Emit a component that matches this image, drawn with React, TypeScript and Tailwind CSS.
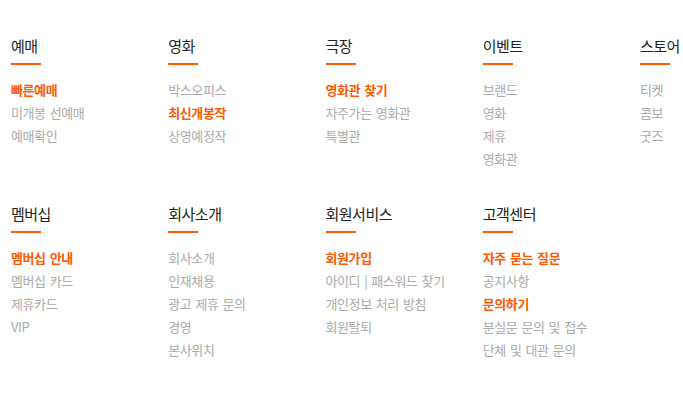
import React from "react";

interface LinkItem {
  label: string;
  hot?: boolean;
}

interface Section {
  title: string;
  links: LinkItem[];
}

const ROWS: Section[][] = [
  [
    { title: "예매", links: [{ label: "빠른예매", hot: true }, { label: "미개봉 선예매" }, { label: "예매확인" }] },
    { title: "영화", links: [{ label: "박스오피스" }, { label: "최신개봉작", hot: true }, { label: "상영예정작" }] },
    { title: "극장", links: [{ label: "영화관 찾기", hot: true }, { label: "자주가는 영화관" }, { label: "특별관" }] },
    { title: "이벤트", links: [{ label: "브랜드" }, { label: "영화" }, { label: "제휴" }, { label: "영화관" }] },
    { title: "스토어", links: [{ label: "티켓" }, { label: "콤보" }, { label: "굿즈" }] },
  ],
  [
    { title: "멤버십", links: [{ label: "멤버십 안내", hot: true }, { label: "멤버십 카드" }, { label: "제휴카드" }, { label: "VIP" }] },
    {
      title: "회사소개",
      links: [{ label: "회사소개" }, { label: "인재채용" }, { label: "광고 제휴 문의" }, { label: "경영" }, { label: "본사위치" }],
    },
    {
      title: "회원서비스",
      links: [{ label: "회원가입", hot: true }, { label: "아이디 | 패스워드 찾기" }, { label: "개인정보 처리 방침" }, { label: "회원탈퇴" }],
    },
    {
      title: "고객센터",
      links: [
        { label: "자주 묻는 질문", hot: true },
        { label: "공지사항" },
        { label: "문의하기", hot: true },
        { label: "분실문 문의 및 접수" },
        { label: "단체 및 대관 문의" },
      ],
    },
  ],
];

export default function App() {
  return (
    <div
      className="w-[683px] h-[400px] overflow-hidden bg-white"
      style={{ fontFamily: '"Noto Sans CJK KR", "Noto Sans", sans-serif' }}
    >
      <div className="pl-[11px] pt-[35px] flex flex-col gap-y-[33px]">
        {ROWS.map((row, i) => (
          <div key={i} className="grid grid-cols-[repeat(5,157.25px)]">
            {row.map((s) => (
              <SectionBlock key={s.title} section={s} />
            ))}
          </div>
        ))}
      </div>
    </div>
  );
}

function SectionBlock({ section }: { section: Section }) {
  return (
    <div>
      <h2 className="text-[15px] leading-[22px] tracking-[-0.5px] text-[#222] whitespace-nowrap">{section.title}</h2>
      <div className="mt-[6px] h-[2px] w-[30px] bg-[#ff5a00]" />
      <ul className="mt-[13px]">
        {section.links.map((l) => (
          <li
            key={l.label}
            className={
              l.hot
                ? "text-[13px] leading-[23px] tracking-[-0.4px] [word-spacing:1.5px] font-bold text-[#ff5a00] whitespace-nowrap"
                : "text-[13px] leading-[23px] tracking-[-0.4px] [word-spacing:1.5px] text-[#aaa] whitespace-nowrap"
            }
          >
            {l.label}
          </li>
        ))}
      </ul>
    </div>
  );
}
